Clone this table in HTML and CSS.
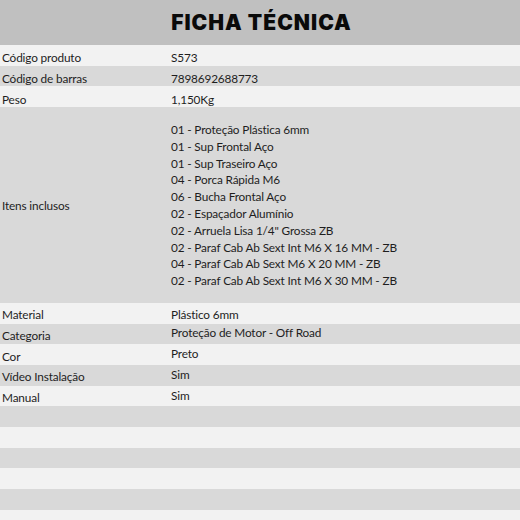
FILE: index.html
```html
<!DOCTYPE html>
<html lang="pt">
<head>
<meta charset="utf-8">
<link rel="stylesheet" href="styles.css">
</head>
<body>
<div class="sheet">
  <div class="title">FICHA TÉCNICA</div>
  <div class="row light"><div class="label">Código produto</div><div class="value">S573</div></div>
  <div class="row dark"><div class="label">Código de barras</div><div class="value">7898692688773</div></div>
  <div class="row light"><div class="label">Peso</div><div class="value">1,150Kg</div></div>
  <div class="row dark items">
    <div class="label">Itens inclusos</div>
    <div class="value list">
      <div>01 - Proteção Plástica 6mm</div>
      <div>01 - Sup Frontal Aço</div>
      <div>01 - Sup Traseiro Aço</div>
      <div>04 - Porca Rápida M6</div>
      <div>06 - Bucha Frontal Aço</div>
      <div>02 - Espaçador Alumínio</div>
      <div>02 - Arruela Lisa 1/4" Grossa ZB</div>
      <div>02 - Paraf Cab Ab Sext Int M6 X 16 MM - ZB</div>
      <div>04 - Paraf Cab Ab Sext M6 X 20 MM - ZB</div>
      <div>02 - Paraf Cab Ab Sext Int M6 X 30 MM - ZB</div>
    </div>
  </div>
  <div class="row light low"><div class="label">Material</div><div class="value">Plástico 6mm</div></div>
  <div class="row dark low"><div class="label">Categoria</div><div class="value up">Proteção de Motor - Off Road</div></div>
  <div class="row light low"><div class="label">Cor</div><div class="value up">Preto</div></div>
  <div class="row dark low"><div class="label">Vídeo Instalação</div><div class="value up">Sim</div></div>
  <div class="row light low"><div class="label">Manual</div><div class="value up">Sim</div></div>
  <div class="row dark"></div>
  <div class="row light"></div>
  <div class="row dark"></div>
  <div class="row light"></div>
  <div class="row dark"></div>
  <div class="row light"></div>
</div>
</body>
</html>
```

FILE: styles.css
```css
html, body {
  margin: 0;
  padding: 0;
  background: #f2f2f2;
}
.sheet {
  width: 520px;
  height: 520px;
  overflow: hidden;
  font-family: Lato, "Liberation Sans", sans-serif;
  font-size: 11.8px;
  letter-spacing: -0.15px;
  color: #1e1e1e;
}
.title {
  height: 45px;
  background: #c0c0c0;
  display: flex;
  align-items: center;
  justify-content: center;
  padding-left: 3px;
  padding-bottom: 1px;
  box-sizing: border-box;
  font-family: Inter, "Liberation Sans", sans-serif;
  font-weight: 900;
  font-size: 21px;
  letter-spacing: 1px;
  color: #0a0a0a;
}
.row {
  height: 20.7px;
  display: flex;
  align-items: flex-end;
  padding-bottom: 0.3px;
  box-sizing: border-box;
}
.row.low {
  padding-bottom: 1.4px;
}
.row.light { background: #f2f2f2; }
.row.dark { background: #d9d9d9; }
.label {
  width: 171px;
  padding-left: 2px;
  box-sizing: border-box;
  flex: none;
}
.value {
  flex: 1;
}
.value.up {
  margin-bottom: 2.5px;
}
.row.items {
  height: 195.9px;
  padding-bottom: 0;
}
.row.items .label {
  align-self: center;
}
.list {
  align-self: flex-start;
  line-height: 16.8px;
  padding-top: 15px;
}
```
